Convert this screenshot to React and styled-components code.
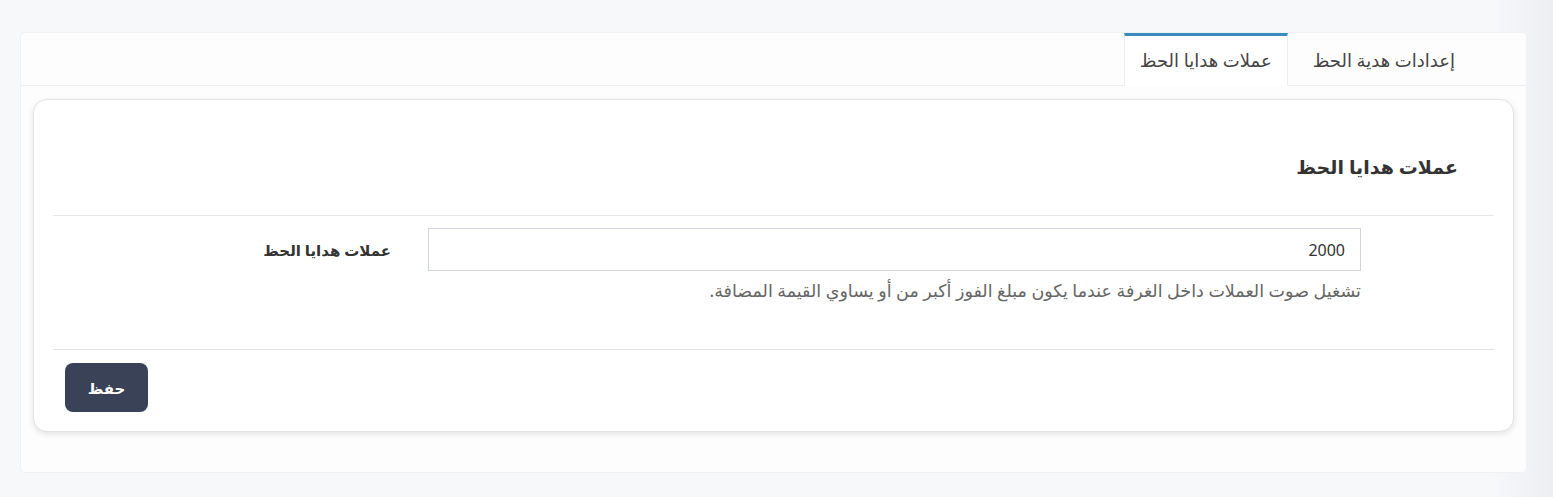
import React from "react";
import styled, { createGlobalStyle } from "styled-components";

const GlobalStyle = createGlobalStyle`
  html, body {
    margin: 0;
    padding: 0;
  }
  body {
    background: linear-gradient(to right, #f7f8fa 96%, #eceef2 100%);
    font-family: "Noto Sans", "DejaVu Sans", sans-serif;
    color: #3c3c3c;
  }
`;

const Page = styled.div`
  padding: 32px 26px 26px 20px;
  min-height: 497px;
  box-sizing: border-box;
  direction: rtl;
`;

const Box = styled.div`
  background: #fdfdfd;
  border-radius: 4px;
  border: 1px solid #f0f1f3;
  padding-bottom: 40px;
`;

const TabBar = styled.div`
  display: flex;
  height: 52px;
  padding-right: 46px;
  border-bottom: 1px solid #eceef1;
`;

const Tab = styled.div`
  display: flex;
  align-items: center;
  justify-content: center;
  padding: 0 ${(p) => (p.$active ? "15px" : "24px")};
  font-size: 18px;
  color: #444;
  box-sizing: border-box;
  margin-bottom: -1px;
  background: ${(p) => (p.$active ? "#fff" : "transparent")};
  border-top: 3px solid ${(p) => (p.$active ? "#3a8bbd" : "transparent")};
  border-left: 1px solid ${(p) => (p.$active ? "#eceef1" : "transparent")};
  border-right: 1px solid ${(p) => (p.$active ? "#eceef1" : "transparent")};
  padding-bottom: 3px;
`;

const Card = styled.div`
  margin: 13px 12px 0 12px;
  background: #fff;
  border: 1px solid #e3e4e6;
  border-radius: 14px;
  box-shadow: 0 2px 6px rgba(0, 0, 0, 0.1);
  padding: 0 19px;
`;

const CardHeader = styled.div`
  height: 116px;
  display: flex;
  align-items: center;
  padding: 18px 36px 0 0;
  box-sizing: border-box;
  border-bottom: 1px solid #e7e8ea;
`;

const Title = styled.h2`
  margin: 0;
  font-size: 19px;
  font-weight: 700;
  color: #333;
`;

const CardBody = styled.div`
  padding: 12px 0 47px;
  border-bottom: 1px solid #e2e3e5;
`;

const FormRow = styled.div`
  display: grid;
  direction: ltr;
  grid-template-columns: 338px 933px;
  column-gap: 37px;
`;

const Label = styled.label`
  direction: rtl;
  text-align: right;
  font-size: 15px;
  font-weight: 700;
  color: #333;
  line-height: 44px;
`;

const Field = styled.div`
  direction: rtl;
`;

const Input = styled.input`
  width: 100%;
  height: 43px;
  box-sizing: border-box;
  border: 1px solid #cfd4de;
  border-radius: 0;
  padding: 0 15px;
  font-family: "Noto Sans", "DejaVu Sans", sans-serif;
  font-size: 16px;
  color: #333;
  text-align: right;
  direction: rtl;
  outline: none;
`;

const Help = styled.p`
  margin: 7px 0 0;
  font-size: 17.5px;
  color: #666;
`;

const CardFooter = styled.div`
  display: flex;
  justify-content: flex-end;
  padding: 13px 12px 19px;
`;

const SaveButton = styled.button`
  width: 83px;
  height: 49px;
  border: none;
  border-radius: 8px;
  background: #394256;
  color: #fff;
  font-family: "Noto Sans", "DejaVu Sans", sans-serif;
  font-size: 15px;
  font-weight: 700;
  cursor: pointer;
`;

export default function App() {
  return (
    <>
      <GlobalStyle />
      <Page>
        <Box>
          <TabBar>
            <Tab>إعدادات هدية الحظ</Tab>
            <Tab $active>عملات هدايا الحظ</Tab>
          </TabBar>
          <Card>
            <CardHeader>
              <Title>عملات هدايا الحظ</Title>
            </CardHeader>
            <CardBody>
              <FormRow>
                <Label>عملات هدايا الحظ</Label>
                <Field>
                  <Input defaultValue="2000" />
                  <Help>
                    تشغيل صوت العملات داخل الغرفة عندما يكون مبلغ الفوز أكبر من أو يساوي القيمة المضافة.
                  </Help>
                </Field>
              </FormRow>
            </CardBody>
            <CardFooter>
              <SaveButton>حفظ</SaveButton>
            </CardFooter>
          </Card>
        </Box>
      </Page>
    </>
  );
}
